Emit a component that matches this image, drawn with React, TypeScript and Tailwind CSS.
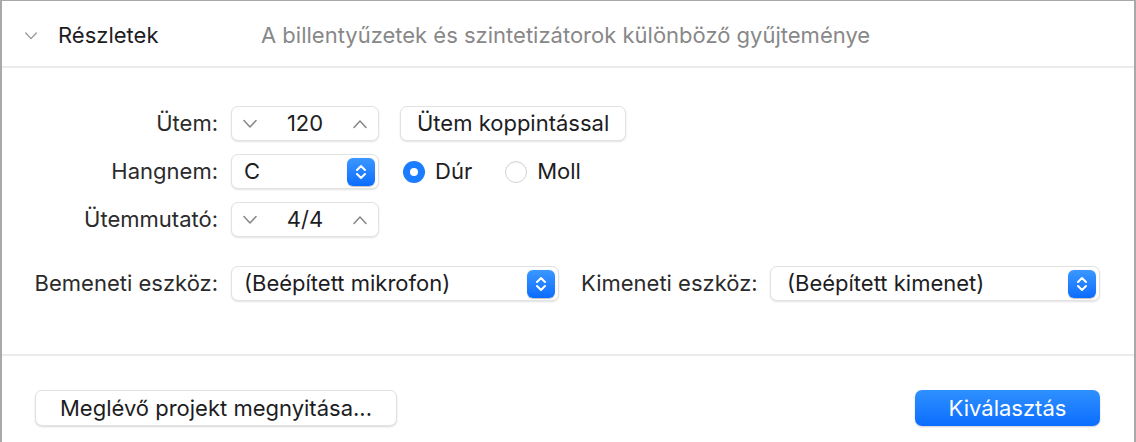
import { ReactNode } from 'react';

const font = { fontFamily: 'Inter, "Noto Sans", sans-serif' };

const Chevron = ({ up = false, className = '' }: { up?: boolean; className?: string }) => (
    <svg width="16" height="10" viewBox="0 0 16 10" className={className}>
        <path
            d={up ? 'M2 8.5 L8 2 L14 8.5' : 'M2 1.5 L8 8 L14 1.5'}
            fill="none"
            stroke="currentColor"
            strokeWidth="1.6"
            strokeLinecap="round"
            strokeLinejoin="round"
        />
    </svg>
);

const SelectArrows = () => (
    <span className="flex items-center justify-center w-[28px] h-[28px] rounded-[6px] bg-gradient-to-b from-[#3b97ff] to-[#0a6cff] shadow-[0_0.5px_1px_rgba(0,0,0,0.25)]">
        <svg width="14" height="20" viewBox="0 0 14 20">
            <path d="M3 8 L7 4 L11 8 M3 12 L7 16 L11 12" fill="none" stroke="white" strokeWidth="2" strokeLinecap="round" strokeLinejoin="round" />
        </svg>
    </span>
);

const Field = ({ className = '', children }: { className?: string; children: ReactNode }) => (
    <div
        className={`flex items-center h-[35px] bg-white rounded-[7px] border border-[#e2e2e2] shadow-[0_1px_2px_rgba(0,0,0,0.12)] ${className}`}
    >
        {children}
    </div>
);

const Stepper = ({ value }: { value: string }) => (
    <Field className="w-[148px] px-[10px] justify-between">
        <Chevron className="text-[#8a8a8a]" />
        <span className="text-[#1d1d1f] -mt-[1px]">{value}</span>
        <Chevron up className="text-[#8a8a8a]" />
    </Field>
);

const Select = ({ value, width, pad = 'pl-[12px]' }: { value: string; width: string; pad?: string }) => (
    <Field className={`${width} ${pad} pr-[3px] justify-between`}>
        <span className="text-[#1d1d1f] -mt-[1px]">{value}</span>
        <SelectArrows />
    </Field>
);

const Label = ({ children }: { children: ReactNode }) => (
    <span className="text-[#2b2b2b] text-right whitespace-nowrap">{children}</span>
);

const Radio = ({ checked, label }: { checked?: boolean; label: string }) => (
    <label className="flex items-center gap-[10px]">
        {checked ? (
            <span className="w-[22px] h-[22px] rounded-full bg-[#1a7dff] flex items-center justify-center">
                <span className="w-[8px] h-[8px] rounded-full bg-white" />
            </span>
        ) : (
            <span className="w-[22px] h-[22px] rounded-full bg-white border border-[#d4d4d4] shadow-[inset_0_1px_1px_rgba(0,0,0,0.06)]" />
        )}
        <span className="text-[#1d1d1f]">{label}</span>
    </label>
);

export default function App() {
    return (
        <div className="w-[1136px] h-[442px] bg-white overflow-hidden text-[22px]" style={font}>
            <div className="h-full border-t border-l-2 border-r-2 border-[#a9a9a9] flex flex-col">
                {/* Header */}
                <div className="h-[65px] flex items-center pl-[22px] pt-[4px] shrink-0">
                    <Chevron className="text-[#9a9a9a] w-[14px]" />
                    <span className="ml-[20px] w-[203px] text-[#1d1d1f]">Részletek</span>
                    <span className="text-[#888888]">A billentyűzetek és szintetizátorok különböző gyűjteménye</span>
                </div>
                <div className="h-[2px] bg-[#ebebeb] shrink-0" />

                {/* Settings */}
                <div className="flex-1 pt-[38px]">
                    <div className="grid grid-cols-[216px_auto] gap-x-[13px] gap-y-[13px] items-center">
                        <Label>Ütem:</Label>
                        <div className="flex items-center gap-[21px]">
                            <Stepper value="120" />
                            <button className="h-[35px] px-[16px] bg-white rounded-[7px] border border-[#e2e2e2] shadow-[0_1px_2px_rgba(0,0,0,0.12)] text-[#1d1d1f]">
                                Ütem koppintással
                            </button>
                        </div>

                        <Label>Hangnem:</Label>
                        <div className="flex items-center gap-[24px]">
                            <Select value="C" width="w-[148px]" />
                            <div className="flex items-center gap-[33px]">
                                <Radio checked label="Dúr" />
                                <Radio label="Moll" />
                            </div>
                        </div>

                        <Label>Ütemmutató:</Label>
                        <div>
                            <Stepper value="4/4" />
                        </div>
                    </div>

                    <div className="flex items-center mt-[29px]">
                        <div className="w-[216px] flex justify-end">
                            <Label>Bemeneti eszköz:</Label>
                        </div>
                        <div className="ml-[13px]">
                            <Select value="(Beépített mikrofon)" width="w-[328px]" />
                        </div>
                        <div className="ml-[22px] w-[176px]">
                            <Label>Kimeneti eszköz:</Label>
                        </div>
                        <div className="ml-[13px]">
                            <Select value="(Beépített kimenet)" width="w-[330px]" pad="pl-[16px]" />
                        </div>
                    </div>
                </div>

                <div className="h-[2px] bg-[#ebebeb] shrink-0" />

                {/* Footer */}
                <div className="h-[86px] shrink-0 flex items-start justify-between pt-[34px] pl-[33px] pr-[34px]">
                    <button className="h-[36px] w-[362px] bg-white rounded-[7px] border border-[#e2e2e2] shadow-[0_1px_2px_rgba(0,0,0,0.15)] text-[#1d1d1f]">
                        Meglévő projekt megnyitása...
                    </button>
                    <button className="h-[36px] w-[185px] rounded-[7px] bg-gradient-to-b from-[#2f90ff] to-[#0a6dff] text-white shadow-[0_1px_2px_rgba(0,0,0,0.2)]">
                        Kiválasztás
                    </button>
                </div>
            </div>
        </div>
    );
}
